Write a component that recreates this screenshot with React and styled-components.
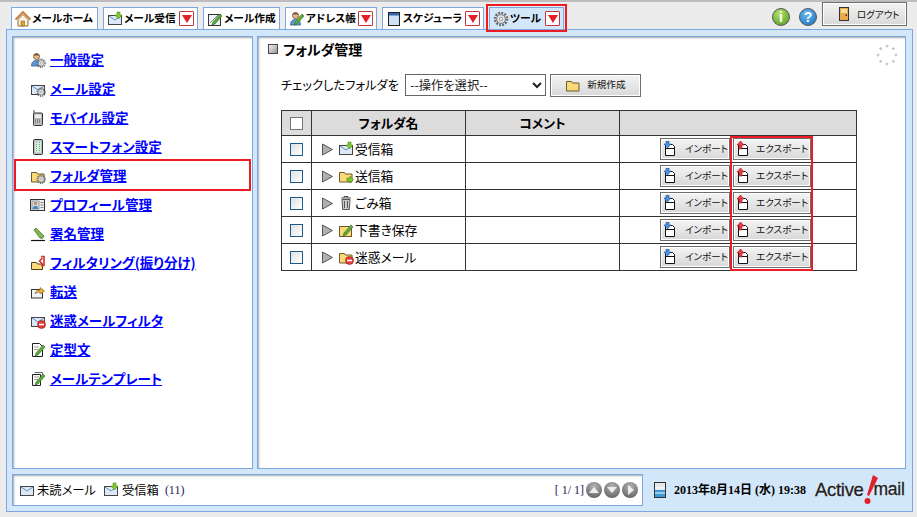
import React from 'react';
import styled, { createGlobalStyle } from 'styled-components';

const GlobalStyle = createGlobalStyle`
  html, body { margin: 0; padding: 0; }
  body {
    width: 917px;
    height: 517px;
    overflow: hidden;
    background: #ececec;
    font-family: "Noto Sans CJK JP", "Liberation Sans", sans-serif;
    font-feature-settings: "palt";
    color: #000;
  }
  button, select { font-feature-settings: "palt"; }
`;

const Page = styled.div`
  height: 517px;
  box-sizing: border-box;
  border-top: 2px solid #bdbdbd;
  display: flex;
  flex-direction: column;
`;

const TopBar = styled.div`
  height: 27px;
  display: flex;
  justify-content: space-between;
  padding: 0 10px 0 11px;
`;

const Tabs = styled.div`
  display: flex;
  align-items: flex-end;
  gap: 5px;
`;

const Tab = styled.div`
  position: relative;
  height: 22px;
  box-sizing: border-box;
  width: ${(p) => p.$w}px;
  padding: 0 3px;
  display: flex;
  align-items: center;
  gap: 1px;
  background: ${(p) => (p.$active ? '#d3e7fb' : '#fff')};
  border: 1px solid #7ea6e0;
  border-bottom: none;
  font-size: 10.7px;
  font-weight: 700;
  line-height: 1;
  white-space: nowrap;
  ${(p) => p.$active && `
    &::after {
      content: '';
      position: absolute;
      left: -4px; right: -4px; top: -4px; bottom: -3px;
      border: 2px solid #ed1c24;
    }
  `}
`;

const TabLabel = styled.span`
  flex: 1;
`;

const DropBox = styled.span`
  width: 15px;
  height: 15px;
  box-sizing: border-box;
  border: 1px solid #c8323a;
  border-radius: 1px;
  background: #fff;
  display: flex;
  align-items: center;
  justify-content: center;
  flex: none;
  &::before {
    content: '';
    border-left: 5px solid transparent;
    border-right: 5px solid transparent;
    border-top: 8px solid #e2202a;
  }
`;

const TopActions = styled.div`
  display: flex;
  align-items: flex-start;
  padding-top: 6px;
`;

const RoundIcon = styled.span`
  width: 18px;
  height: 18px;
  border-radius: 50%;
  border: 1px solid #555;
  box-sizing: border-box;
  margin-right: 9px;
  background: ${(p) => p.$bg};
  color: #fff;
  font: 700 14px/16px "Liberation Sans", sans-serif;
  text-align: center;
`;

const LogoutButton = styled.button`
  width: 85px;
  height: 24px;
  margin: -6px 0 0 -4px;
  padding: 0 0 0 13px;
  display: flex;
  align-items: center;
  gap: 5px;
  box-sizing: border-box;
  border: 1px solid #6e6e6e;
  box-shadow: inset 0 0 0 1px #fff;
  background: linear-gradient(#f3f3f3, #d9d9d9);
  font-family: inherit;
  font-size: 9.500px;
  color: #111;
  white-space: nowrap;
`;

const Shell = styled.div`
  flex: 1;
  margin: 0 4px 5px 6px;
  padding: 6px 6px 5px 5px;
  border: 1px solid #7ea6e0;
  background: #d3e7fb;
  display: flex;
  flex-direction: column;
  gap: 5px;
  min-height: 0;
`;

const Columns = styled.div`
  flex: 1;
  display: flex;
  gap: 4px;
  min-height: 0;
`;

const Pane = styled.div`
  background: #fff;
  border: 1px solid #7ea6e0;
  box-shadow: inset 3px 3px 2px -2px #a8a8a8;
  box-sizing: border-box;
`;

const SidePane = styled(Pane)`
  width: 241px;
  flex: none;
  padding: 8px 1px 0;
`;

const MenuRow = styled.a`
  position: relative;
  height: 29px;
  display: flex;
  align-items: center;
  gap: 4px;
  padding-left: 16px;
  color: #0000ff;
  font-size: 13.5px;
  font-weight: 700;
  line-height: 1;
  white-space: nowrap;
  ${(p) => p.$active && `
    &::after {
      content: '';
      position: absolute;
      left: 0; right: 0; top: -2px; bottom: -1px;
      border: 2px solid #ed1c24;
    }
  `}
`;

const MenuText = styled.span`
  text-decoration: underline;
  text-underline-offset: 1px;
`;

const MainPane = styled(Pane)`
  flex: 1;
  position: relative;
  padding: 2px 0 0 10px;
`;

const Title = styled.div`
  height: 20px;
  display: flex;
  align-items: center;
  gap: 5px;
  font-size: 14px;
  font-weight: 700;
  line-height: 1;
`;

const TitleMark = styled.span`
  width: 8px;
  height: 8px;
  border: 1px solid #444;
  background: linear-gradient(135deg, #eee, #999);
`;

const Spinner = styled.svg`
  position: absolute;
  right: 7px;
  top: 7px;
  width: 22px;
  height: 22px;
`;

const ActionRow = styled.div`
  display: flex;
  align-items: center;
  margin: 14px 0 0 13px;
  height: 24px;
  font-size: 12.3px;
  line-height: 1;
`;

const OpSelect = styled.select`
  width: 141px;
  height: 22px;
  margin: 0 4px 0 6px;
  padding: 0;
  box-sizing: border-box;
  border: 1px solid #666;
  border-radius: 0;
  background: #fff;
  font-family: inherit;
  font-size: 12.3px;
  color: #222;
`;

const GreyButton = styled.button`
  height: ${(p) => p.$h || 23}px;
  width: ${(p) => p.$w}px;
  box-sizing: border-box;
  padding: 0 0 0 ${(p) => p.$pad || 1}px;
  display: flex;
  align-items: center;
  gap: ${(p) => p.$gap || 6}px;
  border: 1px solid #6e6e6e;
  box-shadow: inset 0 0 0 1px #fff;
  background: linear-gradient(#f4f4f4, #d8d8d8);
  font-family: inherit;
  font-size: 9.600px;
  line-height: 1;
  color: #111;
  white-space: nowrap;
`;

const TableWrap = styled.div`
  position: relative;
  margin: 13px 0 0 13px;
  width: 575px;
`;

const FolderTable = styled.table`
  width: 575px;
  table-layout: fixed;
  border-collapse: collapse;
  font-size: 12.8px;
  line-height: 1;
  th, td { border: 1px solid #333; padding: 0; }
  th {
    height: 24px;
    background: #dcdcdc;
    font-weight: 700;
  }
  td { height: 26px; }
`;

const CheckCell = styled.div`
  display: flex;
  justify-content: center;
`;

const CheckBox = styled.span`
  width: 13px;
  height: 13px;
  box-sizing: border-box;
  border: 1px solid ${(p) => (p.$head ? '#777' : '#1c5a8c')};
  background: ${(p) => (p.$head ? '#fff' : 'linear-gradient(135deg, #dfe2e0, #fff)')};
`;

const NameCell = styled.div`
  display: flex;
  align-items: center;
  padding-left: 10px;
`;

const Expand = styled.svg`
  width: 11px;
  height: 13px;
  margin-right: 5px;
  flex: none;
`;

const FolderLabel = styled.span`
  margin-left: 1px;
`;

const ButtonCell = styled.div`
  display: flex;
  gap: 3px;
  padding-left: 40px;
`;

const ExportMark = styled.div`
  position: absolute;
  left: 449px;
  top: 26px;
  width: 83px;
  height: 135px;
  box-sizing: border-box;
  border: 2px solid #ed1c24;
  pointer-events: none;
`;

const BottomRow = styled.div`
  height: 32px;
  display: flex;
  align-items: center;
  flex: none;
`;

const StatusPane = styled(Pane)`
  width: 631px;
  height: 32px;
  flex: none;
  padding: 0 4px 0 6px;
  display: flex;
  align-items: center;
  font-size: 12.3px;
  line-height: 1;
`;

const StatusText = styled.span`
  margin: 0 ${(p) => p.$right}px 0 ${(p) => p.$left}px;
`;

const SerifNum = styled.span`
  font-family: "Liberation Serif", serif;
  font-size: 12px;
  color: #1a1a50;
`;

const Pager = styled.div`
  margin-left: auto;
  display: flex;
  align-items: center;
  gap: 2px;
`;

const PagerDot = styled.span`
  width: 16px;
  height: 16px;
  border-radius: 50%;
  background: radial-gradient(circle at 50% 30%, #b5b5b5, #555);
  display: flex;
  align-items: center;
  justify-content: center;
  ${(p) => p.$dir === 'up' && `&::before { content: ''; border-left: 5px solid transparent; border-right: 5px solid transparent; border-bottom: 6px solid #eee; }`}
  ${(p) => p.$dir === 'down' && `&::before { content: ''; border-left: 5px solid transparent; border-right: 5px solid transparent; border-top: 6px solid #eee; }`}
  ${(p) => p.$dir === 'right' && `&::before { content: ''; border-top: 5px solid transparent; border-bottom: 5px solid transparent; border-left: 6px solid #eee; margin-left: 2px; }`}
`;

const Clock = styled.div`
  display: flex;
  align-items: center;
  margin-left: 9px;
  gap: 6px;
  font: 700 12px/1 "Liberation Serif", "Noto Sans CJK JP", serif;
  white-space: nowrap;
`;

const Logo = styled.div`
  display: flex;
  align-items: center;
  margin-left: 9px;
  font: 400 18.500px/1 "Liberation Sans", sans-serif;
  color: #222;
  letter-spacing: -0.3px;
  white-space: nowrap;
  text-shadow: 0 0 2px #fff;
  -webkit-text-stroke: 0.3px #222;
`;

const LogoMark = styled.svg`
  width: 15px;
  height: 30px;
  margin-top: -1px;
  flex: none;
`;

const LogoMail = styled.span`
  font-size: 17.500px;
  margin-left: -5px;
`;

const IconSvg = styled.svg`
  width: 16px;
  height: 16px;
  flex: none;
`;

const Envelope = () => (
  <>
    <rect x="1.500" y="4.500" width="13" height="9" fill="#dbe9f8" stroke="#444" />
    <path d="M2 5l6 4 6-4" fill="none" stroke="#6c8fb8" />
  </>
);
const GreenDown = () => <path d="M10 1h3v3h2l-3.500 4L8 4h2z" fill="#7ccb2e" stroke="#4c8c18" strokeWidth=".6" />;
const Pencil = () => <path d="M6 11l7-8 2 2-7 8-3 1z" fill="#5cab3a" stroke="#2f6b20" strokeWidth=".6" />;
const Gear = ({ x = 0, y = 0, s = 1 }) => (
  <g transform={`translate(${x} ${y}) scale(${s})`}>
    <circle cx="8" cy="8" r="6" fill="none" stroke="#666" strokeWidth="2.600" strokeDasharray="1.800 1.300" />
    <circle cx="8" cy="8" r="4.400" fill="#e4e4e4" stroke="#666" strokeWidth=".8" />
    <circle cx="8" cy="8" r="1.600" fill="#fff" stroke="#777" strokeWidth=".7" />
  </g>
);
const Folder = () => (
  <path d="M1.500 4.500h5l1 1.500h6.500v8h-12.500z" fill="#fbd976" stroke="#6d5a2a" />
);
const Person = () => (
  <>
    <circle cx="6.500" cy="4.500" r="3" fill="#e9b98e" stroke="#6b4a2a" strokeWidth=".8" />
    <path d="M3.500 3.500c1-2.500 5-2.500 6 0z" fill="#7a5230" />
    <path d="M1.500 14c0-4 2-5.500 5-5.500s5 1.500 5 5.500z" fill="#5d9ad8" stroke="#2f5d8f" strokeWidth=".8" />
  </>
);
const RedX = () => (
  <>
    <circle cx="11.500" cy="11.500" r="4" fill="#e23a3a" stroke="#8f1c1c" strokeWidth=".6" />
    <rect x="9" y="10.700" width="5" height="1.600" fill="#fff" />
  </>
);

const icons = {
  home: (
    <>
      <path d="M.5 8.500L8 1l7.500 7.500" fill="none" stroke="#c97a3c" strokeWidth="1.800" />
      <path d="M3 8.500v6.500h10V8.500L8 3.500z" fill="#fdf3dc" stroke="#8a6a3c" />
      <rect x="6" y="10" width="3.500" height="5" fill="#e0a030" stroke="#7a5a20" strokeWidth=".5" />
    </>
  ),
  mailIn: (<><Envelope /><GreenDown /></>),
  compose: (
    <>
      <rect x="1.500" y="3.500" width="12" height="11" fill="#eef4fb" stroke="#333" />
      <path d="M3 12l8-8" stroke="#888" />
      <Pencil />
    </>
  ),
  address: (<><Person /><Pencil /></>),
  schedule: (
    <>
      <rect x="2.500" y="1.500" width="11" height="13" fill="#cfe0f4" stroke="#222" />
      <rect x="3" y="2" width="10" height="2.500" fill="#3464b0" />
    </>
  ),
  gear: <Gear />,
  door: (
    <>
      <rect x="3.500" y="1.500" width="9" height="13" fill="#eba94a" stroke="#333" />
      <rect x="5" y="3" width="6" height="4" fill="#f8dca0" />
      <rect x="9.500" y="8.500" width="1.500" height="1.500" fill="#333" />
    </>
  ),
  userGear: (<><Person /><Gear x={6} y={6} s={0.65} /></>),
  mailGear: (<><Envelope /><Gear x={6} y={6} s={0.65} /></>),
  mobile: (
    <>
      <path d="M4 0v3" stroke="#444" />
      <rect x="3.500" y="3" width="9" height="12.500" rx="1" fill="#bbb" stroke="#333" />
      <rect x="5" y="4.500" width="6" height="3.500" fill="#e8eef2" />
      <path d="M5 10h6M5 12h6" stroke="#555" strokeDasharray="1 1" />
    </>
  ),
  smart: (
    <>
      <rect x="3.500" y=".5" width="9" height="15" rx="1" fill="#bbb" stroke="#333" />
      <rect x="5" y="2.500" width="6" height="11" fill="#d9efe0" />
      <path d="M6.500 3v10M9.500 3v10" stroke="#5cab7a" strokeDasharray="1 1" />
    </>
  ),
  folderGear: (<><Folder /><Gear x={6} y={6} s={0.65} /></>),
  profile: (
    <>
      <rect x=".5" y="2.500" width="14" height="11" fill="#eee" stroke="#333" />
      <rect x="2" y="4" width="7" height="8" fill="#cfe0ea" stroke="#666" strokeWidth=".6" />
      <circle cx="5.500" cy="6.500" r="1.800" fill="#c98f62" />
      <path d="M3 12c0-2.500 1-3 2.500-3s2.500.5 2.500 3z" fill="#4d7fb8" />
      <path d="M10.500 5.500h3M10.500 8h3M10.500 10.500h3" stroke="#888" />
    </>
  ),
  sign: (
    <>
      <path d="M4 4l2-2 8 8-1.500 2.500L10 12z" fill="#7db84e" stroke="#3c6a22" strokeWidth=".7" />
      <path d="M1 14.500h14" stroke="#111" strokeWidth="1.200" />
    </>
  ),
  filter: (
    <>
      <path d="M1.500 7.500h5l1 1.500h5v5.500h-11z" fill="#fbd976" stroke="#4d4020" />
      <path d="M11 1.500h3v9h-3M12.500 3l-3 3 3 3" fill="none" stroke="#d8302a" strokeWidth="1.600" />
    </>
  ),
  forward: (
    <>
      <rect x="1.500" y="5.500" width="11" height="8.500" fill="#eef4fb" stroke="#333" />
      <path d="M5 10c0-3 3-4 5-4V3.500l4.500 3.500L10 10V8c-2 0-4 .500-5 2z" fill="#f0b030" stroke="#8a6010" strokeWidth=".6" />
    </>
  ),
  spam: (<><Envelope /><RedX /></>),
  note: (
    <>
      <path d="M2.500 1.500h7l3 3v10h-10z" fill="#fff" stroke="#222" />
      <path d="M4 5h5M4 7.500h4" stroke="#999" />
      <Pencil />
    </>
  ),
  template: (
    <>
      <path d="M2.500 3.500h8v11h-8z" fill="#fff" stroke="#222" />
      <path d="M4.500 1.500h8v6" fill="none" stroke="#666" />
      <path d="M4 6h5M4 8.500h4" stroke="#999" />
      <Pencil />
    </>
  ),
  folderOut: (
    <>
      <Folder />
      <path d="M9 10h3V8l3.500 3.500L12 15v-2H9z" fill="#7ccb2e" stroke="#3f7c15" strokeWidth=".6" />
    </>
  ),
  trash: (
    <>
      <path d="M4 4.500h8l-.7 10H4.700z" fill="#ccc" stroke="#555" />
      <path d="M3 3h10M6.500 6v7M9.500 6v7M6 3V1.500h4V3" fill="none" stroke="#555" />
    </>
  ),
  draft: (
    <>
      <rect x="1.500" y="4.500" width="12" height="10" fill="#fbd976" stroke="#6d5a2a" />
      <Pencil />
    </>
  ),
  folderSpam: (<><Folder /><RedX /></>),
  mail: <Envelope />,
  folder: <Folder />,
  importDoc: (
    <>
      <path d="M3.500 3.500h7l2 2v9h-9z" fill="#fff" stroke="#111" />
      <path d="M3.500 7.500h9" stroke="#111" />
      <path d="M4 0h3v3h2L5.500 7 2 3h2z" fill="#4a90dc" stroke="#1f4f90" strokeWidth=".6" />
    </>
  ),
  exportDoc: (
    <>
      <path d="M3.500 3.500h7l2 2v9h-9z" fill="#fff" stroke="#111" />
      <path d="M3.500 7.500h9" stroke="#111" />
      <path d="M4 8V4H2l3.500-4L9 4H7v4z" fill="#ee3a44" stroke="#8f1c1c" strokeWidth=".6" />
    </>
  ),
  status: (
    <>
      <rect x="2.500" y=".5" width="11" height="15" fill="#e4e8ec" stroke="#333" />
      <rect x="3" y="8" width="10" height="7" fill="#3c9ad8" />
      <path d="M3 6h10M3 11h10" stroke="#fff" />
    </>
  ),
};

const Icon = ({ name }) => <IconSvg viewBox="0 0 16 16">{icons[name]}</IconSvg>;

const tabs = [
  { label: 'メールホーム', icon: 'home', w: 87 },
  { label: 'メール受信', icon: 'mailIn', w: 95, drop: true },
  { label: 'メール作成', icon: 'compose', w: 77 },
  { label: 'アドレス帳', icon: 'address', w: 92, drop: true },
  { label: 'スケジューラ', icon: 'schedule', w: 102, drop: true },
  { label: 'ツール', icon: 'gear', w: 75, drop: true, active: true },
];

const menu = [
  { label: '一般設定', icon: 'userGear' },
  { label: 'メール設定', icon: 'mailGear' },
  { label: 'モバイル設定', icon: 'mobile' },
  { label: 'スマートフォン設定', icon: 'smart' },
  { label: 'フォルダ管理', icon: 'folderGear', active: true },
  { label: 'プロフィール管理', icon: 'profile' },
  { label: '署名管理', icon: 'sign' },
  { label: 'フィルタリング(振り分け)', icon: 'filter' },
  { label: '転送', icon: 'forward' },
  { label: '迷惑メールフィルタ', icon: 'spam' },
  { label: '定型文', icon: 'note' },
  { label: 'メールテンプレート', icon: 'template' },
];

const folders = [
  { name: '受信箱', icon: 'mailIn' },
  { name: '送信箱', icon: 'folderOut' },
  { name: 'ごみ箱', icon: 'trash' },
  { name: '下書き保存', icon: 'draft' },
  { name: '迷惑メール', icon: 'folderSpam' },
];

const spinnerDots = Array.from({ length: 8 }, (_, i) => {
  const a = (i / 8) * Math.PI * 2;
  return { x: 11 + Math.cos(a) * 9, y: 11 + Math.sin(a) * 9 };
});

export default function App() {
  return (
    <Page>
      <GlobalStyle />
      <TopBar>
        <Tabs>
          {tabs.map((t) => (
            <Tab key={t.label} $w={t.w} $active={t.active}>
              <Icon name={t.icon} />
              <TabLabel>{t.label}</TabLabel>
              {t.drop && <DropBox />}
            </Tab>
          ))}
        </Tabs>
        <TopActions>
          <RoundIcon $bg="radial-gradient(circle at 40% 30%, #b4e06a, #4f9a1e)">i</RoundIcon>
          <RoundIcon $bg="radial-gradient(circle at 40% 30%, #6ab8f0, #1670c0)">?</RoundIcon>
          <LogoutButton>
            <Icon name="door" />
            ログアウト
          </LogoutButton>
        </TopActions>
      </TopBar>
      <Shell>
        <Columns>
          <SidePane>
            {menu.map((m) => (
              <MenuRow key={m.label} $active={m.active}>
                <Icon name={m.icon} />
                <MenuText>{m.label}</MenuText>
              </MenuRow>
            ))}
          </SidePane>
          <MainPane>
            <Title>
              <TitleMark />
              フォルダ管理
            </Title>
            <Spinner viewBox="0 0 22 22">
              {spinnerDots.map((d, i) => (
                <path
                  key={i}
                  d={`M${d.x - 1.5} ${d.y}h3M${d.x} ${d.y - 1.5}v3`}
                  stroke="#bcbcbc"
                  strokeWidth="1"
                />
              ))}
            </Spinner>
            <ActionRow>
              チェックしたフォルダを
              <OpSelect defaultValue="none">
                <option value="none">--操作を選択--</option>
              </OpSelect>
              <GreyButton $w={91} $pad={14} $gap={6}>
                <Icon name="folder" />
                新規作成
              </GreyButton>
            </ActionRow>
            <TableWrap>
              <FolderTable>
                <colgroup>
                  <col width="30" />
                  <col width="154" />
                  <col width="154" />
                  <col width="237" />
                </colgroup>
                <thead>
                  <tr>
                    <th><CheckCell><CheckBox $head /></CheckCell></th>
                    <th>フォルダ名</th>
                    <th>コメント</th>
                    <th />
                  </tr>
                </thead>
                <tbody>
                  {folders.map((f) => (
                    <tr key={f.name}>
                      <td><CheckCell><CheckBox /></CheckCell></td>
                      <td>
                        <NameCell>
                          <Expand viewBox="0 0 11 13">
                            <path d="M.5 1l10 5.500-10 5.500z" fill="#b0b0b0" stroke="#555" />
                          </Expand>
                          <Icon name={f.icon} />
                          <FolderLabel>{f.name}</FolderLabel>
                        </NameCell>
                      </td>
                      <td />
                      <td>
                        <ButtonCell>
                          <GreyButton $w={70} $h={22} $gap={7}>
                            <Icon name="importDoc" />
                            インポート
                          </GreyButton>
                          <GreyButton $w={78} $h={22} $gap={5}>
                            <Icon name="exportDoc" />
                            エクスポート
                          </GreyButton>
                        </ButtonCell>
                      </td>
                    </tr>
                  ))}
                </tbody>
              </FolderTable>
              <ExportMark />
            </TableWrap>
          </MainPane>
        </Columns>
        <BottomRow>
          <StatusPane>
            <Icon name="mail" />
            <StatusText $left={2} $right={7}>未読メール</StatusText>
            <Icon name="mailIn" />
            <StatusText $left={3} $right={6}>受信箱</StatusText>
            <SerifNum>(11)</SerifNum>
            <Pager>
              <SerifNum>[ 1/ 1]</SerifNum>
              <PagerDot $dir="up" />
              <PagerDot $dir="down" />
              <PagerDot $dir="right" />
            </Pager>
          </StatusPane>
          <Clock>
            <Icon name="status" />
            2013年8月14日 (水) 19:38
          </Clock>
          <Logo>
            Active
            <LogoMark viewBox="0 0 15 30">
              <path d="M9 0l5 3-9 18-2-1z" fill="#e2202a" />
              <circle cx="3.500" cy="26" r="3" fill="#e2202a" />
            </LogoMark>
            <LogoMail>mail</LogoMail>
          </Logo>
        </BottomRow>
      </Shell>
    </Page>
  );
}
